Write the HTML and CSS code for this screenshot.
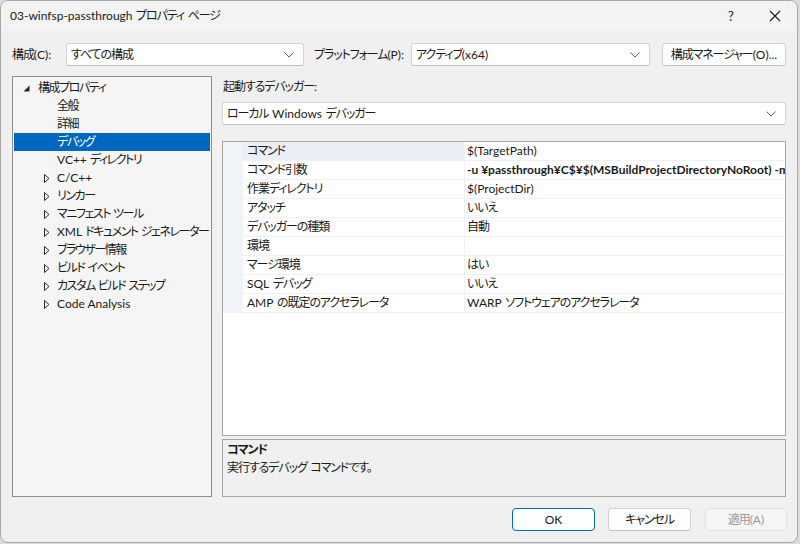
FILE: index.html
```html
<!DOCTYPE html>
<html lang="ja">
<head>
<meta charset="utf-8">
<title>プロパティ ページ</title>
<link rel="stylesheet" href="styles.css">
</head>
<body>
<div class="window">
  <div class="titlebar">
    <span class="title"><span class="en">03-winfsp-passthrough</span> プロパティ ページ</span>
    <span class="help en">?</span>
    <span class="close"><svg width="12" height="12" viewBox="0 0 12 12"><path d="M1 1L11 11M11 1L1 11" stroke="#1a1a1a" stroke-width="1.1" fill="none"/></svg></span>
  </div>

  <div class="toolbar">
    <span class="lbl lbl-config">構成<span class="en">(C):</span></span>
    <div class="combo combo-config"><span class="combo-text">すべての構成</span><svg class="chev" width="10" height="6" viewBox="0 0 10 6"><path d="M0.5 0.5L5 5L9.5 0.5" stroke="#606060" fill="none"/></svg></div>
    <span class="lbl lbl-platform">プラットフォーム<span class="en">(P):</span></span>
    <div class="combo combo-platform"><span class="combo-text">アクティブ<span class="en">(x64)</span></span><svg class="chev" width="10" height="6" viewBox="0 0 10 6"><path d="M0.5 0.5L5 5L9.5 0.5" stroke="#606060" fill="none"/></svg></div>
    <button class="btn btn-manager">構成マネージャー<span class="en">(O)...</span></button>
  </div>

  <div class="main">
    <div class="tree">
      <div class="node lvl0"><span class="tw"><svg width="7" height="7" viewBox="0 0 7 7"><path d="M6.5 0.5V6.5H0.5Z" fill="#2b2b2b"/></svg></span>構成プロパティ</div>
      <div class="node lvl1"><span class="tw"></span>全般</div>
      <div class="node lvl1"><span class="tw"></span>詳細</div>
      <div class="node lvl1 selected"><span class="tw"></span>デバッグ</div>
      <div class="node lvl1"><span class="tw"></span><span class="en">VC++</span>&nbsp;ディレクトリ</div>
      <div class="node lvl1"><span class="tw"><svg width="6" height="9" viewBox="0 0 6 9"><path d="M0.5 0.5L5 4.5L0.5 8.5Z" stroke="#2b2b2b" fill="none"/></svg></span><span class="en">C/C++</span></div>
      <div class="node lvl1"><span class="tw"><svg width="6" height="9" viewBox="0 0 6 9"><path d="M0.5 0.5L5 4.5L0.5 8.5Z" stroke="#2b2b2b" fill="none"/></svg></span>リンカー</div>
      <div class="node lvl1"><span class="tw"><svg width="6" height="9" viewBox="0 0 6 9"><path d="M0.5 0.5L5 4.5L0.5 8.5Z" stroke="#2b2b2b" fill="none"/></svg></span>マニフェスト ツール</div>
      <div class="node lvl1"><span class="tw"><svg width="6" height="9" viewBox="0 0 6 9"><path d="M0.5 0.5L5 4.5L0.5 8.5Z" stroke="#2b2b2b" fill="none"/></svg></span><span class="en">XML</span>&nbsp;ドキュメント ジェネレーター</div>
      <div class="node lvl1"><span class="tw"><svg width="6" height="9" viewBox="0 0 6 9"><path d="M0.5 0.5L5 4.5L0.5 8.5Z" stroke="#2b2b2b" fill="none"/></svg></span>ブラウザー情報</div>
      <div class="node lvl1"><span class="tw"><svg width="6" height="9" viewBox="0 0 6 9"><path d="M0.5 0.5L5 4.5L0.5 8.5Z" stroke="#2b2b2b" fill="none"/></svg></span>ビルド イベント</div>
      <div class="node lvl1"><span class="tw"><svg width="6" height="9" viewBox="0 0 6 9"><path d="M0.5 0.5L5 4.5L0.5 8.5Z" stroke="#2b2b2b" fill="none"/></svg></span>カスタム ビルド ステップ</div>
      <div class="node lvl1"><span class="tw"><svg width="6" height="9" viewBox="0 0 6 9"><path d="M0.5 0.5L5 4.5L0.5 8.5Z" stroke="#2b2b2b" fill="none"/></svg></span><span class="en">Code Analysis</span></div>
    </div>

    <div class="pane">
      <div class="pane-label">起動するデバッガー:</div>
      <div class="combo combo-debugger"><span class="combo-text">ローカル <span class="en">Windows</span> デバッガー</span><svg class="chev" width="10" height="6" viewBox="0 0 10 6"><path d="M0.5 0.5L5 5L9.5 0.5" stroke="#606060" fill="none"/></svg></div>

      <div class="grid">
        <div class="row current"><span class="strip"></span><span class="name">コマンド</span><span class="value en">$(TargetPath)</span></div>
        <div class="row"><span class="strip"></span><span class="name">コマンド引数</span><span class="value bold en">-u ¥passthrough¥C$¥$(MSBuildProjectDirectoryNoRoot) -m C:</span></div>
        <div class="row"><span class="strip"></span><span class="name">作業ディレクトリ</span><span class="value en">$(ProjectDir)</span></div>
        <div class="row"><span class="strip"></span><span class="name">アタッチ</span><span class="value">いいえ</span></div>
        <div class="row"><span class="strip"></span><span class="name">デバッガーの種類</span><span class="value">自動</span></div>
        <div class="row"><span class="strip"></span><span class="name">環境</span><span class="value"></span></div>
        <div class="row"><span class="strip"></span><span class="name">マージ環境</span><span class="value">はい</span></div>
        <div class="row"><span class="strip"></span><span class="name"><span class="en">SQL</span> デバッグ</span><span class="value">いいえ</span></div>
        <div class="row"><span class="strip"></span><span class="name"><span class="en">AMP</span> の既定のアクセラレータ</span><span class="value"><span class="en">WARP</span> ソフトウェアのアクセラレータ</span></div>
      </div>

      <div class="desc">
        <div class="desc-title">コマンド</div>
        <div class="desc-text">実行するデバッグ コマンドです。</div>
      </div>
    </div>
  </div>

  <div class="buttons">
    <button class="btn btn-ok en">OK</button>
    <button class="btn btn-cancel">キャンセル</button>
    <button class="btn btn-apply">適用<span class="en">(A)</span></button>
  </div>
</div>
</body>
</html>
```

FILE: styles.css
```css
* { box-sizing: border-box; }

html, body {
  margin: 0;
  padding: 0;
}

body {
  width: 800px;
  height: 544px;
  background: #dcdcdc;
  font-family: "Lato", "Noto Sans CJK JP", sans-serif;
  font-feature-settings: "palt" 1;
  font-size: 12px;
  letter-spacing: -1.1px;
  word-spacing: 1.6px;
  color: #1a1a1a;
  overflow: hidden;
}

.en { letter-spacing: 0; word-spacing: 0; }

.window {
  width: 798px;
  height: 543px;
  background: #f0f0f0;
  border: 1px solid #a8a8a8;
  border-radius: 8px;
  overflow: hidden;
  display: flex;
  flex-direction: column;
}

/* title bar */
.titlebar {
  height: 30px;
  flex: none;
  display: flex;
  align-items: center;
  background: #f3f3f3;
  padding-left: 9px;
  line-height: 16px;
}
.title { flex: 1; color: #1a1a1a; }
.help {
  width: 20px;
  text-align: center;
  margin-right: 28px;
  font-size: 13px;
}
.close {
  width: 12px;
  height: 12px;
  display: flex;
  margin-right: 16px;
}

/* toolbar */
.toolbar {
  flex: none;
  height: 23px;
  margin-top: 12px;
  padding-left: 11px;
  display: flex;
  align-items: center;
}
.lbl { line-height: 23px; white-space: nowrap; }
.lbl-config { width: 54px; }
.lbl-platform { width: 97px; margin-left: 10px; }

.combo {
  height: 23px;
  background: #ffffff;
  border: 1px solid #d2d2d2;
  border-bottom-color: #bdbdbd;
  border-radius: 3px;
  display: flex;
  align-items: center;
  padding-left: 4px;
  padding-right: 9px;
}
.combo-text { flex: 1; white-space: nowrap; line-height: 18px; }
.chev { flex: none; }
.combo-config { width: 238px; }
.combo-platform { width: 239px; }

.btn {
  font-family: inherit;
  font-feature-settings: "palt" 1;
  font-size: 12px;
  letter-spacing: -1.1px;
  color: #1a1a1a;
  height: 23px;
  background: #fdfdfd;
  border: 1px solid #d0d0d0;
  border-bottom-color: #c0c0c0;
  border-radius: 4px;
  padding: 0;
  line-height: 18px;
  white-space: nowrap;
}
.btn.en { letter-spacing: 0; }
.btn-manager { width: 124px; margin-left: 12px; }

/* main area */
.main {
  flex: none;
  height: 421px;
  margin-top: 10px;
  padding-left: 11px;
  display: flex;
}

.tree {
  width: 200px;
  height: 421px;
  border: 1px solid #8b8d94;
  background: #f5f5f5;
  padding: 2px 1px 0 1px;
  letter-spacing: -1.45px;
  word-spacing: 1.4px;
}
.tree .en { letter-spacing: 0; word-spacing: 0; }
.node {
  height: 18px;
  line-height: 18px;
  display: flex;
  align-items: center;
  white-space: nowrap;
}
.node .tw {
  flex: none;
  display: flex;
  align-items: center;
}
.lvl0 { padding-left: 9px; }
.lvl0 .tw { width: 15px; }
.lvl1 { padding-left: 30px; }
.lvl1 .tw { width: 13px; }
.node.selected {
  background: #0067c0;
  color: #ffffff;
}

.pane {
  width: 564px;
  margin-left: 10px;
  display: flex;
  flex-direction: column;
}
.pane-label {
  height: 18px;
  line-height: 18px;
  margin-top: 2px;
  padding-left: 1px;
}
.combo-debugger {
  width: 564px;
  margin-top: 6px;
}

/* property grid */
.grid {
  margin-top: 16px;
  height: 295px;
  background: #ffffff;
  border: 1px solid #a6a6a6;
  display: flex;
  flex-direction: column;
  overflow: hidden;
}
.row {
  height: 19px;
  flex: none;
  display: flex;
}
.strip {
  width: 20px;
  flex: none;
  background: #f0f3f8;
}
.name {
  width: 222px;
  flex: none;
  padding-left: 4px;
  line-height: 18px;
  border-bottom: 1px solid #eef0f3;
  border-right: 1px solid #eef0f3;
  white-space: nowrap;
  overflow: hidden;
}
.value {
  flex: 1;
  min-width: 0;
  padding-left: 2px;
  line-height: 18px;
  border-bottom: 1px solid #eef0f3;
  white-space: nowrap;
  overflow: hidden;
}
.value.bold { font-weight: bold; }
.row.current .name { background: #eaeff7; }

/* description */
.desc {
  margin-top: 3px;
  height: 58px;
  border: 1px solid #a6a6a6;
  background: #f0f0f0;
  padding: 1px 4px 0 4px;
}
.desc-title {
  font-weight: bold;
  line-height: 18px;
}
.desc-text { line-height: 18px; }

/* bottom buttons */
.buttons {
  flex: none;
  margin-top: 11px;
  display: flex;
  justify-content: flex-end;
  padding-right: 10px;
}
.btn-ok {
  width: 83px;
  border: 1px solid #0067c0;
}
.btn-cancel { width: 83px; margin-left: 13px; }
.btn-apply {
  width: 82px;
  margin-left: 14px;
  background: #f5f5f5;
  border-color: #e3e3e3;
  color: #9a9a9a;
}
```
